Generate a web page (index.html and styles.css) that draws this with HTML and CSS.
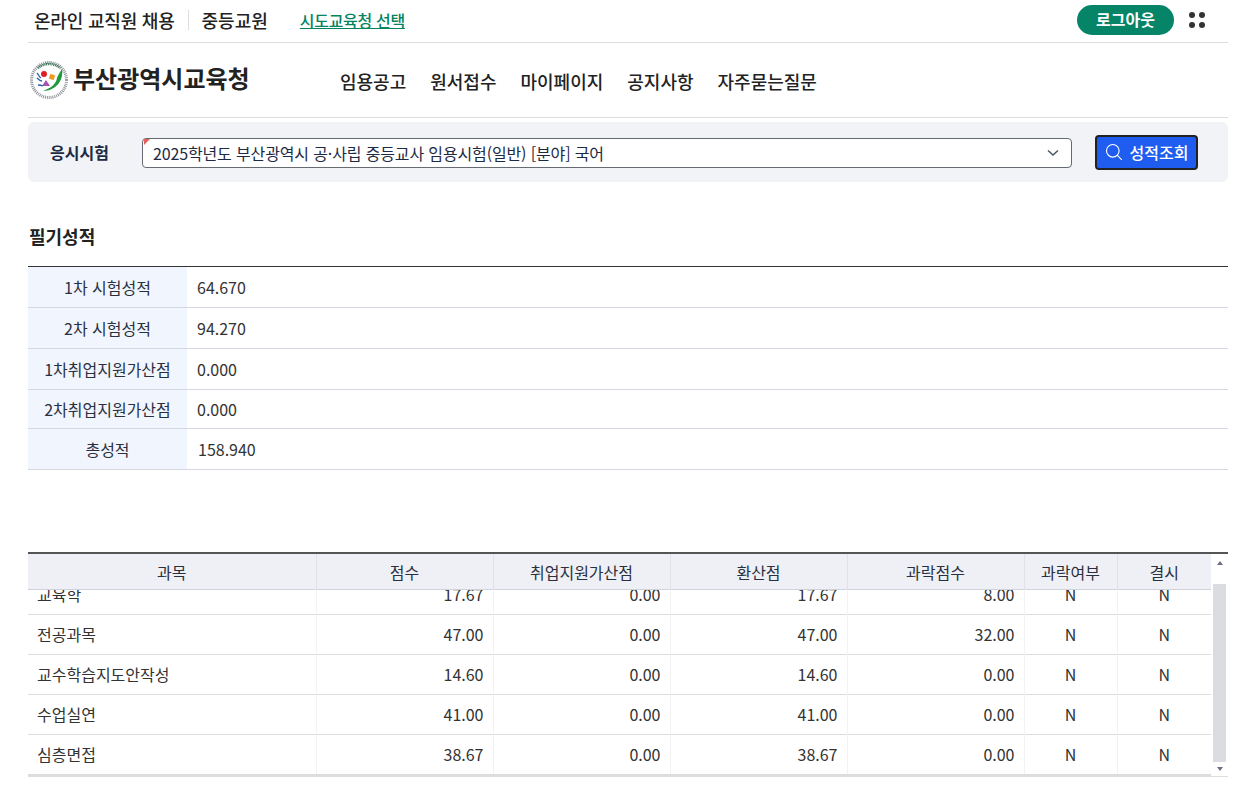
FILE: index.html
```html
<!DOCTYPE html>
<html lang="ko">
<head>
    <meta charset="UTF-8">
    <title>성적조회</title>
    <link rel="stylesheet" href="styles.css">
</head>
<body>
    <div id="wrap">
        <div class="topbar">
            <span class="site-name">온라인 교직원 채용</span>
            <span class="site-sub">중등교원</span>
            <a class="region-link" href="#">시도교육청 선택</a>
            <a class="logout" href="#">로그아웃</a>
            <span class="dots"><i></i><i></i><i></i><i></i></span>
        </div>
        <div class="header">
            <div class="logo">
                <svg class="emblem" width="40" height="40" viewBox="0 0 40 40">
                    <circle cx="20" cy="20" r="17.500" fill="none" stroke="#8d939a" stroke-width="3" stroke-dasharray="1 .9"/>
                    <path d="M9 8A17 17 0 0 1 31 8" fill="none" stroke="#2f6f4f" stroke-width="2.500" stroke-dasharray="1 .8"/>
                    <path d="M33 9C35 20 27 31 14 31 22 28 27 24 28 18 29 15 31 12 33 9z" fill="#1f9a3c"/>
                    <circle cx="15" cy="14" r="3" fill="#e02020"/>
                    <rect x="20.500" y="14.500" width="5" height="5" fill="#f39a1e" transform="rotate(20 23 17)"/>
                    <path d="M17 20l4 6h-8z" fill="#a557b0"/>
                    <path d="M8 13c2 2 2 4 4 5M8 18c2 2 3 3 5 3M9 25c2 0 3 0 5 1" fill="none" stroke="#2a5db0" stroke-width="1.300"/>
                </svg>
                <span class="logo-text">부산광역시교육청</span>
            </div>
            <ul class="nav">
                <li>임용공고</li>
                <li>원서접수</li>
                <li>마이페이지</li>
                <li>공지사항</li>
                <li>자주묻는질문</li>
            </ul>
        </div>
        <div class="search">
            <span class="search-label">응시시험</span>
            <div class="select">
                <span>2025학년도 부산광역시 공·사립 중등교사 임용시험(일반) [분야] 국어</span>
                <svg width="12" height="8" viewBox="0 0 12 8"><path d="M1 1.500l5 4.500 5-4.500" fill="none" stroke="#4b5563" stroke-width="1.500"/></svg>
            </div>
            <button class="search-btn">
                <svg width="18" height="18" viewBox="0 0 18 18"><circle cx="7.800" cy="7.800" r="6.300" fill="none" stroke="#fff" stroke-width="1.100"/><path d="M12.400 12.400l4.400 4.400" stroke="#fff" stroke-width="1.100"/></svg>
                성적조회
            </button>
        </div>

        <h2 class="title">필기성적</h2>
        <table class="score">
            <tr><th>1차 시험성적</th><td>64.670</td></tr>
            <tr><th>2차 시험성적</th><td>94.270</td></tr>
            <tr><th>1차취업지원가산점</th><td>0.000</td></tr>
            <tr class="short"><th>2차취업지원가산점</th><td>0.000</td></tr>
            <tr><th>총성적</th><td class="total">158.940</td></tr>
        </table>

        <div class="grid">
            <div class="grid-main">
                <table class="grid-head">
                    <colgroup><col class="c1"><col class="c2"><col class="c2"><col class="c2"><col class="c2"><col class="c3"><col class="c4"></colgroup>
                    <tr><th>과목</th><th>점수</th><th>취업지원가산점</th><th>환산점</th><th>과락점수</th><th>과락여부</th><th>결시</th></tr>
                </table>
                <div class="grid-body">
                    <table class="grid-rows">
                        <colgroup><col class="c1"><col class="c2"><col class="c2"><col class="c2"><col class="c2"><col class="c3"><col class="c4"></colgroup>
                        <tr><td>교육학</td><td>17.67</td><td>0.00</td><td>17.67</td><td>8.00</td><td>N</td><td>N</td></tr>
                        <tr><td>전공과목</td><td>47.00</td><td>0.00</td><td>47.00</td><td>32.00</td><td>N</td><td>N</td></tr>
                        <tr><td>교수학습지도안작성</td><td>14.60</td><td>0.00</td><td>14.60</td><td>0.00</td><td>N</td><td>N</td></tr>
                        <tr><td>수업실연</td><td>41.00</td><td>0.00</td><td>41.00</td><td>0.00</td><td>N</td><td>N</td></tr>
                        <tr><td>심층면접</td><td>38.67</td><td>0.00</td><td>38.67</td><td>0.00</td><td>N</td><td>N</td></tr>
                    </table>
                </div>
            </div>
            <div class="scrollbar">
                <span class="arrow up"></span>
                <span class="thumb"></span>
                <span class="arrow down"></span>
            </div>
        </div>
    </div>
</body>
</html>
```

FILE: styles.css
```css
* {
    box-sizing: border-box;
}
body {
    margin: 0;
    background-color: #fff;
    color: #333;
    font-family: "Noto Sans CJK KR", "Noto Sans", sans-serif;
    font-size: 16px;
}
#wrap {
    width: 1200px;
    margin-left: 28px;
}
.topbar {
    display: flex;
    align-items: center;
    height: 43px;
    padding: 0 23px 3px 6px;
    border-bottom: 1px solid #ddd;
}
.site-name {
    font-size: 18px;
    font-weight: 500;
    letter-spacing: -0.2px;
    padding-right: 13px;
    border-right: 1px solid #ddd;
    line-height: 20px;
    color: #222;
}
.site-sub {
    font-size: 18px;
    font-weight: 500;
    margin-left: 13px;
    color: #222;
}
.region-link {
    font-size: 16px;
    font-weight: 500;
    letter-spacing: -0.3px;
    color: #04835f;
    margin-left: 32px;
}
.logout {
    margin-left: auto;
    width: 97px;
    height: 30px;
    line-height: 28px;
    text-align: center;
    background-color: #068467;
    color: #fff;
    font-size: 16px;
    font-weight: 700;
    border-radius: 15px;
    text-decoration: none;
}
.dots {
    display: grid;
    grid-template-columns: 6px 6px;
    gap: 4px;
    margin-left: 15px;
}
.dots i {
    width: 6px;
    height: 6px;
    border-radius: 50%;
    background-color: #333;
}
.header {
    display: flex;
    height: 75px;
    border-bottom: 1px solid #ddd;
}
.logo {
    display: flex;
    align-items: center;
    width: 312px;
    height: 74px;
    padding-bottom: 1px;
}
.emblem {
    margin-left: 1px;
}
.logo-text {
    font-size: 24px;
    font-weight: 700;
    margin-left: 4px;
    margin-top: -4px;
    color: #222;
}
.nav {
    display: flex;
    gap: 24px;
    list-style: none;
    margin: 0;
    padding: 25px 0 0;
    font-size: 18px;
    font-weight: 500;
    color: #222;
}
.search {
    display: flex;
    align-items: center;
    height: 60px;
    margin-top: 4px;
    padding: 0 30px 0 22px;
    background-color: #f1f3f7;
    border-radius: 6px;
}
.search-label {
    width: 92px;
    font-weight: 700;
    color: #1d2a44;
}
.select {
    position: relative;
    display: flex;
    align-items: center;
    justify-content: space-between;
    width: 930px;
    height: 30px;
    margin-top: 1px;
    padding: 0 12px 0 10px;
    background-color: #fff;
    border: 1px solid #666a73;
    border-radius: 4px;
    color: #1d2a44;
    letter-spacing: -0.14px;
}
.select::before {
    content: "";
    position: absolute;
    top: 0;
    left: 1px;
    border-top: 6px solid #e8605a;
    border-right: 6px solid transparent;
}
.search-btn {
    display: flex;
    align-items: center;
    justify-content: center;
    gap: 7px;
    width: 103px;
    height: 35px;
    margin-left: 23px;
    padding: 0;
    background-color: #1f5df0;
    color: #fff;
    border: 2px solid #222;
    border-radius: 4px;
    font-family: inherit;
    font-size: 16px;
    font-weight: 500;
}
.title {
    margin: 42px 0 0 1px;
    height: 42px;
    font-size: 18px;
    font-weight: 700;
    line-height: 25px;
    color: #222;
}
.score {
    width: 100%;
    border-collapse: collapse;
    border-top: 1px solid #333;
}
.score tr {
    height: 41px;
    border-bottom: 1px solid #d5d8e2;
}
.score tr.short {
    height: 39px;
}
.score th {
    width: 159px;
    padding: 0;
    background-color: #f1f5fd;
    font-weight: 400;
    color: #2a3040;
}
.score td {
    padding: 0 10px;
}
.score td.total {
    padding-left: 11px;
}
.grid {
    display: flex;
    margin-top: 82px;
    border-top: 2px solid #555;
    border-bottom: 1px solid #ddd;
}
.grid-main {
    width: 1183px;
    border-bottom: 2px solid #ddd;
}
.grid table {
    width: 100%;
    table-layout: fixed;
    border-collapse: collapse;
}
.c1 { width: 288px; }
.c2 { width: 177px; }
.c3 { width: 93px; }
.c4 { width: 94px; }
.grid-head {
    height: 36px;
    background-color: #eef0f5;
    border-bottom: 1px solid #cfd2da;
}
.grid-head th {
    padding: 0;
    font-weight: 400;
    color: #2a3040;
    border-right: 1px solid #e0e2e8;
}
.grid-head th:last-child {
    border-right: none;
}
.grid-body {
    height: 184px;
    overflow: hidden;
}
.grid-rows {
    margin-top: -16px;
}
.grid-rows tr {
    height: 40px;
    border-bottom: 1px solid #ddd;
}
.grid-rows tr:last-child {
    border-bottom: none;
}
.grid-rows td {
    padding: 0 9px;
    text-align: right;
    border-right: 1px solid #f2f2f4;
}
.grid-rows td:first-child {
    text-align: left;
}
.grid-rows td:nth-child(n+6) {
    text-align: center;
}
.grid-rows td:last-child {
    border-right: none;
}
.scrollbar {
    display: flex;
    flex-direction: column;
    align-items: center;
    width: 17px;
    padding-top: 7px;
}
.arrow {
    width: 0;
    height: 0;
    border-left: 3.5px solid transparent;
    border-right: 3.5px solid transparent;
}
.arrow.up {
    border-bottom: 4px solid #6b7080;
}
.arrow.down {
    border-top: 4px solid #6b7080;
    margin-top: 5px;
}
.thumb {
    width: 13px;
    height: 178px;
    margin-top: 19px;
    background-color: #dadce1;
}
```
